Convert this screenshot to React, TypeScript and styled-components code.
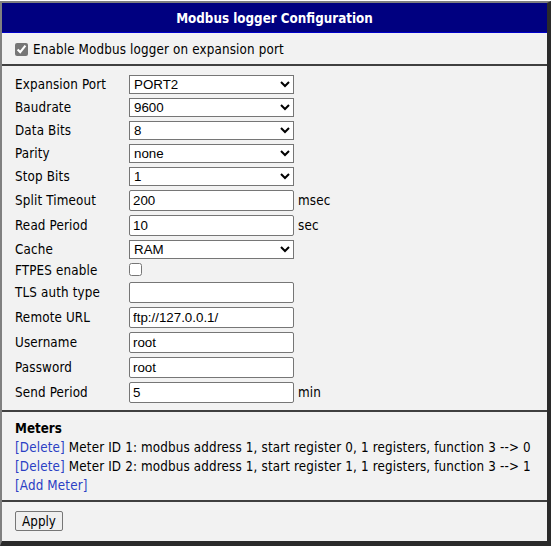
import { createGlobalStyle } from "styled-components";
import styled from "styled-components";

const GlobalStyle = createGlobalStyle`
  html, body {
    margin: 0;
    padding: 0;
    background: #ffffff;
  }
  body {
    padding-top: 1px;
    font-family: "DejaVu Sans Condensed", "DejaVu Sans", sans-serif;
    font-size: 13.3px;
    letter-spacing: 0.15px;
    color: #000;
  }
`;

const Panel = styled.div`
  width: 551px;
  height: 545px;
  box-sizing: border-box;
  display: flex;
  flex-direction: column;
  background: #f2f2f2;
  border-style: solid;
  border-color: #808080 #2a2a2a #2a2a2a #808080;
  border-width: 2px 4px 5px 2px;
`;

const Header = styled.div`
  height: 30px;
  padding-top: 2px;
  box-sizing: border-box;
  background: #000080;
  border-bottom: 1px solid #0000c8;
  color: #fff;
  font-weight: bold;
  letter-spacing: 0;
  display: flex;
  align-items: center;
  justify-content: center;
`;

const Section = styled.div<{ $pad: string; $h: number }>`
  box-sizing: border-box;
  height: ${(p) => p.$h}px;
  padding: ${(p) => p.$pad};
  border-bottom: 2px solid #404040;

  &:last-child {
    border-bottom: none;
  }
`;

const CheckLine = styled.label`
  display: flex;
  align-items: center;
  gap: 5px;
  height: 100%;
`;

const Check = styled.input.attrs({ type: "checkbox" })`
  margin: 0;
  width: 13px;
  height: 13px;
  accent-color: #767676;
`;

const FormGrid = styled.div`
  display: grid;
  grid-template-columns: 110px 165px auto;
  column-gap: 4px;
  align-items: center;
`;

const Label = styled.div<{ $h: number }>`
  height: ${(p) => p.$h}px;
  display: flex;
  align-items: center;
  white-space: nowrap;
`;

const Select = styled.select`
  width: 165px;
  height: 19px;
  margin: 0;
  font-family: "Liberation Sans", Arial, sans-serif;
  font-size: 13.33px;
  letter-spacing: 0;
  background: #fff;
`;

const TextInput = styled.input`
  box-sizing: border-box;
  width: 165px;
  height: 21px;
  margin: 0;
  padding: 1px 3px;
  font-family: "Liberation Sans", Arial, sans-serif;
  font-size: 13.33px;
  letter-spacing: 0;
  border: 1px solid #767676;
  border-radius: 2px;
  background: #fff;
`;

const Unit = styled.span``;

const Title = styled.div`
  font-weight: bold;
  letter-spacing: 0;
  line-height: 19px;
`;

const Line = styled.div`
  line-height: 19px;
  white-space: nowrap;
`;

const Action = styled.a`
  color: #2b3fc4;
  text-decoration: none;
  cursor: pointer;
`;

const Button = styled.button`
  width: 48px;
  height: 20px;
  padding: 0;
  font-family: inherit;
  font-size: 13.3px;
  background: #efefef;
  border: 1px solid #767676;
  border-radius: 2px;
`;

type Row =
  | { label: string; kind: "select"; value: string; options: string[] }
  | { label: string; kind: "input"; value: string; unit?: string }
  | { label: string; kind: "check" };

const rows: Row[] = [
  { label: "Expansion Port", kind: "select", value: "PORT2", options: ["PORT1", "PORT2"] },
  { label: "Baudrate", kind: "select", value: "9600", options: ["1200", "2400", "4800", "9600", "19200", "38400", "57600", "115200"] },
  { label: "Data Bits", kind: "select", value: "8", options: ["7", "8"] },
  { label: "Parity", kind: "select", value: "none", options: ["none", "even", "odd"] },
  { label: "Stop Bits", kind: "select", value: "1", options: ["1", "2"] },
  { label: "Split Timeout", kind: "input", value: "200", unit: "msec" },
  { label: "Read Period", kind: "input", value: "10", unit: "sec" },
  { label: "Cache", kind: "select", value: "RAM", options: ["RAM", "USB"] },
  { label: "FTPES enable", kind: "check" },
  { label: "TLS auth type", kind: "input", value: "" },
  { label: "Remote URL", kind: "input", value: "ftp://127.0.0.1/" },
  { label: "Username", kind: "input", value: "root" },
  { label: "Password", kind: "input", value: "root" },
  { label: "Send Period", kind: "input", value: "5", unit: "min" },
];

const meters = [
  "Meter ID 1: modbus address 1, start register 0, 1 registers, function 3 --> 0",
  "Meter ID 2: modbus address 1, start register 1, 1 registers, function 3 --> 1",
];

const heightOf = (r: Row) => (r.kind === "select" ? 23 : r.kind === "input" ? 25 : 19);

const App = () => {
  return (
    <>
      <GlobalStyle />
      <Panel>
        <Header>Modbus logger Configuration</Header>
        <Section $h={33} $pad="1px 13px 0">
          <CheckLine>
            <Check defaultChecked />
            Enable Modbus logger on expansion port
          </CheckLine>
        </Section>
        <Section $h={346} $pad="7px 13px 5px">
          <FormGrid>
            {rows.map((r) => (
              <>
                <Label key={r.label} $h={heightOf(r)}>{r.label}</Label>
                <div>
                  {r.kind === "select" && (
                    <Select defaultValue={r.value}>
                      {r.options.map((o) => (
                        <option key={o}>{o}</option>
                      ))}
                    </Select>
                  )}
                  {r.kind === "input" && <TextInput defaultValue={r.value} />}
                  {r.kind === "check" && <Check />}
                </div>
                <Unit>{r.kind === "input" ? r.unit : ""}</Unit>
              </>
            ))}
          </FormGrid>
        </Section>
        <Section $h={90} $pad="7px 13px 5px">
          <Title>Meters</Title>
          {meters.map((m) => (
            <Line key={m}>
              <Action>[Delete]</Action> {m}
            </Line>
          ))}
          <Line>
            <Action>[Add Meter]</Action>
          </Line>
        </Section>
        <Section $h={36} $pad="9px 13px 0">
          <Button>Apply</Button>
        </Section>
      </Panel>
    </>
  );
};

export default App;
